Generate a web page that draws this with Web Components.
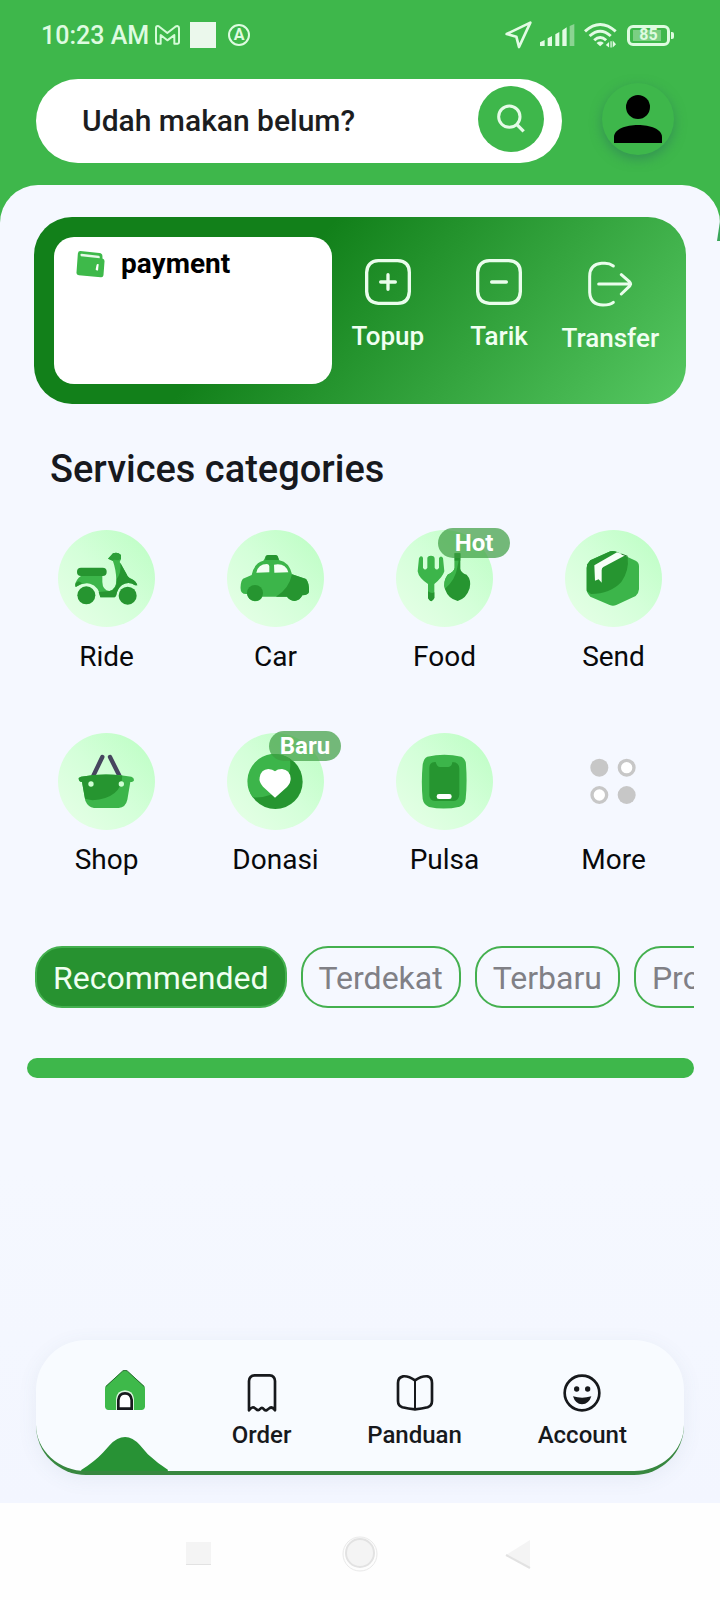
<!DOCTYPE html>
<html lang="id">
<head>
<meta charset="utf-8">
<meta name="viewport" content="width=device-width, initial-scale=1">
<title>Home</title>
<style>
  html { height: 100%; }
  body { margin: 0; min-height: 100%; display: flex; font-family: Roboto, sans-serif; }
</style>
</head>
<body>
<home-screen></home-screen>
<script>
const define = (name, markup, render, observed = []) => {
  const template = document.createElement('template');
  template.innerHTML = markup;
  customElements.define(name, class extends HTMLElement {
    static observedAttributes = observed;
    constructor() {
      super();
      this.attachShadow({ mode: 'open' }).append(template.content.cloneNode(true));
    }
    connectedCallback() { if (render) render(this, this.shadowRoot); }
    attributeChangedCallback() { if (render) render(this, this.shadowRoot); }
  });
};

const icons = {
  mail: ['0 0 75 60', '<path d="M3 9Q3 3 8 3Q11 3 13 5L37 24L61 5Q64 3 67 3Q72 4 72 9V52Q72 56 68 56H58V30L37 46L17 30V56H7Q3 56 3 52Z" fill="none" stroke="#d5fbd8" stroke-width="6" stroke-linejoin="round"/>'],
  locate: ['0 0 81 84', '<path d="M76 5L42 78L34 47L5 39Z" fill="none" stroke="#e2fbe4" stroke-width="8" stroke-linejoin="round"/>'],
  signal: ['0 0 105 66', '<path d="M0 66V55L14 48V66ZM23 66V43L36 36V66ZM46 66V31L58 24V66ZM67 66V19L80 10V66Z" fill="#e2fbe4"/><path d="M89 66V6L103 0V66Z" fill="#8bd492"/>'],
  wifi: ['0 0 100 78', '<g fill="none" stroke="#e2fbe4" stroke-width="9"><path d="M3 28Q49 -14 96 28"/><path d="M17 42Q49 13 81 42"/><path d="M31 55Q49 38 67 55"/></g><path d="M38 63Q49 55 60 63L49 73Z" fill="#e2fbe4"/><path d="M66 69L76 60V77ZM80 58H84V77H80ZM87 77V56L97 67Z" fill="#e2fbe4"/>'],
  search: ['0 0 90 90', '<circle cx="40" cy="38" r="32" fill="none" stroke="#e5fbe7" stroke-width="9"/><path d="M62 61L83 82" stroke="#e5fbe7" stroke-width="10"/>'],
  person: ['0 0 144 144', '<circle cx="72" cy="36" r="36"/><path d="M0 144V126C0 102 36 90 72 90S144 102 144 126V144Z"/>'],
  wallet: ['0 0 84 82', '<path d="M12 3L68 9Q77 10 77 18V25Q84 27 83 34L80 74Q79 81 72 80L8 74Q0 73 1 66L5 10Q6 3 12 3Z" fill="#3eb94a"/><path d="M16 11L66 17Q70 18 69 22V24L14 18Q10 12 16 11Z" fill="#e6f9e8"/><path d="M60 43Q62 39 66 42L64 60Q59 61 57 57Z" fill="#fff"/>'],
  plus: ['0 0 138 138', '<g fill="none" stroke="#eafdec" stroke-width="10" stroke-linecap="round"><path d="M40 5H98Q133 7 133 40V98Q131 133 98 133H40Q7 131 5 98V40Q7 7 40 5Z"/><path d="M47 69H91M69 47V91"/></g>'],
  minus: ['0 0 138 138', '<g fill="none" stroke="#eafdec" stroke-width="10" stroke-linecap="round"><path d="M40 5H98Q133 7 133 40V98Q131 133 98 133H40Q7 131 5 98V40Q7 7 40 5Z"/><path d="M47 69H91"/></g>'],
  transfer: ['0 0 138 144', '<g fill="none" stroke="#eafdec" stroke-width="9" stroke-linecap="round" stroke-linejoin="round"><path d="M79 21Q68 13 54 13H44Q8 16 8 52V100Q10 137 48 138Q70 138 79 130"/><path d="M35 75H131M103 47L127 68Q134 75 127 82L103 105"/></g>'],
  ride: ['85 60 291 291', '<path d="M235 146L250 130Q263 124 274 135V147L270 156L291 193Q294 203 306 207Q320 214 323 226H316Q297 212 277 225Q263 235 259 258L255 262H212Q208 229 181 221Q160 217 138 231Q133 219 147 203L157 196H218V216Q219 241 239 243Q260 238 260 210Q259 178 249 151Z" fill="#3cb54a"/><path d="M272 158L291 193Q294 203 306 207Q320 214 323 226H316Q297 212 277 225Q263 235 259 258L255 262H212L207 246L240 243Q263 237 261 207Q276 187 272 158ZM138 231Q133 219 147 214L158 220Z" fill="#269530"/><path d="M235 146L250 130Q263 124 274 135V147L265 151Q250 147 249 153Z" fill="#2c9f38"/><rect x="142" y="173" width="89" height="25" rx="12" fill="#269530"/><circle cx="170" cy="256" r="27" fill="#269530"/><circle cx="294" cy="257" r="27" fill="#269530"/>'],
  car: ['593 60 291 291', '<path d="M641 206L667 195Q675 158 702 152L711 137Q727 133 744 137L750 151Q779 156 788 193L830 207Q840 219 839 245Q837 255 819 256Q812 271 796 273Q779 270 773 260H699Q695 272 676 274Q657 270 653 252Q631 254 634 228Q635 212 641 206Z" fill="#3cb54a"/><path d="M788 193L830 207Q840 219 839 245Q837 255 819 256Q812 271 796 273Q779 270 773 260H740Q779 237 788 193Z" fill="#269530"/><path d="M708 150V143Q708 135 716 135H740Q747 136 748 150Z" fill="#269530"/><circle cx="677" cy="249" r="24" fill="#269530"/><path d="M681 188Q686 162 713 162Q720 163 720 169V187ZM734 164Q769 158 777 187L735 188Z" fill="#f2fff3"/>'],
  food: ['79 60 291 291', '<path d="M153 139Q159 138 160 144V173Q166 184 173 173V145Q173 137 184 137Q195 137 195 146V173Q201 184 208 173V144Q214 135 220 144L224 184Q219 202 194 222V264Q184 283 175 264V222Q147 204 144 184L148 144Z" fill="#3cb54a"/><path d="M175 244Q186 252 194 247V264Q184 283 175 264Z" fill="#269530"/><path d="M255 130H272V176Q274 188 291 194Q306 210 300 235Q290 266 264 273Q236 267 226 238Q219 216 234 194Q252 186 255 174Z" fill="#269530"/><path d="M255 130H266Q270 145 263 172Q257 211 226 236Q219 213 234 194Q252 186 255 174Z" fill="#3cb54a"/><path d="M255 130H272V152H255Z" fill="#269530"/>'],
  send: ['587 60 291 291', '<path d="M654 163L663 151L723 124Q732 121 741 125L799 152Q809 157 809 169V238Q808 251 799 258L741 285Q731 290 721 285L663 260Q652 250 652 238V174Z" fill="#3cb54a"/><path d="M654 163L663 151L723 124Q732 121 741 125L775 141Q780 182 756 216Q722 252 665 252L652 243V174Z" fill="#269530"/><path d="M675 166L743 127L768 136L702 171Q697 174 697 181V218L688 208L677 212Z" fill="#f7fff7"/><path d="M756 132L775 139" stroke="#267b2e" stroke-width="3"/>'],
  shop: ['85 69 291 291', '<path d="M218 141L190 199M241 141L270 199" stroke="#46455e" stroke-width="13" stroke-linecap="round"/><path d="M147 204L154 200Q232 187 305 200Q313 202 313 210Q312 216 302 216L293 269Q288 292 267 294H193Q175 291 167 272L157 216Q147 216 147 204Z" fill="#3cb54a"/><path d="M147 204L154 200Q220 189 278 197Q276 264 188 271L166 266L157 216Q147 216 147 204Z" fill="#269530"/><circle cx="184" cy="222" r="8" fill="#d0ffd4"/><circle cx="275" cy="222" r="8" fill="#d0ffd4"/>'],
  donate: ['592 69 291 291', '<circle cx="737" cy="215" r="82" fill="#269530"/><path d="M669 262A82 82 0 0 1 780 145Q789 194 757 229Q725 266 669 262Z" fill="#3cb54a"/><path d="M736 263L700 230Q687 216 690 202Q694 178 716 177Q729 178 736 184Q743 177 757 177Q781 180 783 205Q784 218 772 231Z" fill="#fff"/>'],
  phone: ['79 69 291 291', '<path d="M173 140Q224 128 275 140Q289 147 289 165Q293 217 288 267Q285 285 270 290Q224 301 178 291Q162 284 159 267Q154 216 159 164Q162 145 173 140Z" fill="#3cb54a"/><path d="M179 174Q179 155 198 156Q202 171 211 171H236Q247 169 248 156Q268 156 269 176V253Q268 272 252 273H196Q178 271 179 253Z" fill="#269530"/><rect x="201" y="252" width="45" height="15" rx="7" fill="#fff"/>'],
  more: ['587 69 291 291', '<g fill="#c7c7c7"><circle cx="690" cy="173" r="27"/><circle cx="772" cy="255" r="27"/></g><g fill="#fff" stroke="#c7c7c7" stroke-width="10"><circle cx="772" cy="173" r="22"/><circle cx="690" cy="255" r="22"/></g>'],
  home: ['0 0 120 120', '<path d="M53 3Q60 -2 67 3L117 48Q120 52 120 56V110Q119 119 110 120H10Q1 119 0 110V56Q0 52 3 48Z" fill="#3eb94a"/><path d="M2 50L53 3Q60 -2 67 3L118 50" fill="none" stroke="#256b2d" stroke-width="3"/><path d="M33 120V86Q36 62 60 61Q84 62 87 86V120Z" fill="#d9f7dc"/><path d="M40 116V90Q42 70 60 70Q78 70 80 90V116Z" fill="#fff" stroke="#17191c" stroke-width="8"/>'],
  receipt: ['0 0 120 120', '<path d="M21 112V24Q22 8 38 7H83Q98 8 99 24V112Q91 100 83 105L75 111Q69 114 65 108Q60 101 54 108Q49 115 42 108Q31 97 21 112Z" fill="none" stroke="#17191c" stroke-width="8" stroke-linejoin="round"/>'],
  book: ['0 0 120 120', '<path d="M60 22Q40 8 24 10Q9 13 9 30V84Q9 98 22 103Q40 108 60 109Q80 108 98 103Q111 98 111 84V30Q111 13 98 10Q80 8 60 22Z" fill="none" stroke="#17191c" stroke-width="8" stroke-linejoin="round"/><path d="M60 22V109" stroke="#17191c" stroke-width="6"/>'],
  smile: ['0 0 120 120', '<circle cx="60" cy="60" r="52" fill="none" stroke="#17191c" stroke-width="8"/><circle cx="44" cy="48" r="8" fill="#17191c"/><circle cx="77" cy="48" r="8" fill="#17191c"/><path d="M33 70Q60 78 88 70Q81 93 60 94Q40 93 33 70Z" fill="#17191c"/>'],
  bump: ['0 0 260 102', '<path d="M0 102V99Q42 72 65 47L86 24Q108 0 132 0Q154 0 176 24L200 52Q230 80 260 98V102Z" fill="#289235"/>'],
  recents: ['0 0 36 36', '<rect x="6" y="8" width="25" height="21" fill="#e2e2e2"/><rect x="6" y="6" width="25" height="22" fill="#f4f4f4"/>'],
  circle: ['0 0 36 36', '<circle cx="18" cy="18" r="17" fill="#fdfdfd" stroke="#e9e9e9" stroke-width="1"/><circle cx="18" cy="17" r="14" fill="#f4f4f4" stroke="#e2e2e2" stroke-width="2"/>'],
  back: ['0 0 36 36', '<path d="M26 4V32L2 19Z" fill="#f4f4f4"/><path d="M2 19L26 32" stroke="#e2e2e2" stroke-width="2"/>'],
};

define('ui-icon', `<style>:host{display:block;flex:none}svg{display:block;width:100%;height:100%}</style><svg aria-hidden="true"></svg>`,
  (el, root) => {
    const icon = icons[el.getAttribute('name')];
    if (!icon) return;
    const svg = root.querySelector('svg');
    svg.setAttribute('viewBox', icon[0]);
    svg.innerHTML = icon[1];
  }, ['name']);

define('status-bar', `
<style>
  :host { display: flex; align-items: center; justify-content: space-between; height: 70px; padding: 0 46px 0 41px; color: #defbe0; font-weight: 500; font-size: 25px; }
  div { display: flex; align-items: center; }
  .mail { width: 25px; height: 20px; margin: 0 10px 0 6px; }
  .app { width: 26px; height: 26px; margin-right: 12px; background: #ebf8ec; }
  .ring { box-sizing: border-box; width: 22px; height: 22px; border: 2px solid; border-radius: 50%; justify-content: center; font-size: 16px; line-height: 18px; font-weight: 700; }
  .locate { width: 27px; height: 28px; margin-right: 8px; }
  .signal { width: 35px; height: 22px; margin-right: 9px; }
  .wifi { width: 33px; height: 26px; margin-right: 10px; }
  .cell { box-sizing: border-box; width: 43px; height: 21px; border: 3px solid; border-radius: 6px; justify-content: center; font-size: 16px; line-height: 16px; font-weight: 700; background: linear-gradient(#7bcf83, #7bcf83) 3px 2px / 28px 11px no-repeat; }
  .tip { width: 3px; height: 7px; margin-left: 1px; background: currentColor; border-radius: 0 2px 2px 0; }
</style>
<div><span>10:23 AM</span><ui-icon class="mail" name="mail"></ui-icon><span class="app"></span><div class="ring">A</div></div>
<div><ui-icon class="locate" name="locate"></ui-icon><ui-icon class="signal" name="signal"></ui-icon><ui-icon class="wifi" name="wifi"></ui-icon><div class="cell">85</div><span class="tip"></span></div>`);

define('search-bar', `
<style>
  :host { display: flex; align-items: flex-start; padding: 9px 46px 22px 36px; gap: 40px; }
  form { flex: 1; display: flex; box-sizing: border-box; height: 84px; margin: 0; padding: 7px 18px 7px 46px; background: #fff; border-radius: 42px; }
  input { flex: 1; min-width: 0; border: 0; padding: 0; outline: 0; background: none; font: 500 30px/34px Roboto, sans-serif; color: #1c1d20; }
  input::placeholder { color: #1c1d20; opacity: 1; }
  button { display: grid; place-items: center; flex: none; border: 0; padding: 0; border-radius: 50%; background: #3eb74b; }
  .go { width: 66px; height: 66px; }
  .go ui-icon { width: 30px; height: 30px; }
  .me { width: 72px; height: 72px; margin-top: 4px; box-shadow: 0 4px 12px #2d7a5a99; }
  .me ui-icon { width: 48px; height: 48px; }
</style>
<form role="search"><input type="text" aria-label="Search" placeholder="Udah makan belum?"><button class="go" type="button" aria-label="Search"><ui-icon name="search"></ui-icon></button></form>
<button class="me" type="button" aria-label="Profile"><ui-icon name="person"></ui-icon></button>`);

define('wallet-action', `
<style>
  :host { display: block; }
  button { display: flex; flex-direction: column; align-items: center; gap: 17px; width: 100%; border: 0; padding: 22px 0 0; background: none; color: #f0fff1; font: 500 26px/28px Roboto, sans-serif; }
  ui-icon { width: 46px; height: 46px; }
  :host([tall]) ui-icon { height: 48px; }
</style>
<button type="button"><ui-icon></ui-icon><slot></slot></button>`,
  (el, root) => root.querySelector('ui-icon').setAttribute('name', el.getAttribute('icon')));

define('wallet-card', `
<style>
  :host { display: grid; grid-template-columns: 5fr 6fr; box-sizing: border-box; min-height: 187px; margin: 0 34px; padding: 20px; border-radius: 38px; background: linear-gradient(132deg, #12801a 37%, #56c862 100%); }
  .panel { display: flex; align-items: flex-start; gap: 16px; padding: 13px 22px; background: #fff; border-radius: 20px; color: #000; font-weight: 700; font-size: 28px; line-height: 28px; }
  .panel ui-icon { width: 29px; height: 28px; }
  .actions { display: grid; grid-template-columns: repeat(3, 1fr); }
</style>
<div class="panel"><ui-icon name="wallet"></ui-icon><span>payment</span></div>
<div class="actions">
  <wallet-action icon="plus">Topup</wallet-action>
  <wallet-action icon="minus">Tarik</wallet-action>
  <wallet-action icon="transfer" tall>Transfer</wallet-action>
</div>`);

define('service-item', `
<style>
  :host { display: block; }
  a { display: flex; flex-direction: column; align-items: center; gap: 13px; color: #08090b; text-decoration: none; font-size: 28px; line-height: 34px; }
  .disc { position: relative; width: 97px; height: 97px; border-radius: 50%; background: linear-gradient(225deg, #c0fec7 10%, #d4ffd9 50%, #e4ffe5 90%); }
  :host([plain]) .disc { background: none; }
  .tag { position: absolute; left: 42px; top: -2px; box-sizing: border-box; width: 72px; height: 30px; border-radius: 15px; background: #3c9c40b3; color: #fff; text-align: center; font-weight: 700; font-size: 24px; line-height: 30px; }
  .tag[hidden] { display: none; }
</style>
<a href="#"><div class="disc"><ui-icon></ui-icon><span class="tag" hidden></span></div><slot></slot></a>`,
  (el, root) => {
    root.querySelector('ui-icon').setAttribute('name', el.getAttribute('icon'));
    const tag = root.querySelector('.tag');
    tag.textContent = el.getAttribute('tag') || '';
    tag.hidden = !tag.textContent;
  });

define('service-grid', `
<style>
  :host { display: block; }
  h2 { margin: 43px 50px 39px; color: #17191e; font-weight: 500; font-size: 38px; line-height: 44px; }
  .grid { display: grid; grid-template-columns: repeat(4, 1fr); row-gap: 59px; margin: 0 22px; }
</style>
<h2>Services categories</h2>
<div class="grid">
  <service-item icon="ride">Ride</service-item>
  <service-item icon="car">Car</service-item>
  <service-item icon="food" tag="Hot">Food</service-item>
  <service-item icon="send">Send</service-item>
  <service-item icon="shop">Shop</service-item>
  <service-item icon="donate" tag="Baru">Donasi</service-item>
  <service-item icon="phone">Pulsa</service-item>
  <service-item icon="more" plain>More</service-item>
</div>`);

define('filter-chip', `
<style>
  :host { display: block; flex: none; }
  button { display: block; height: 62px; padding: 2px 16px 0; border: 2px solid #44b04f; border-radius: 27px; background: none; color: #808086; font: 400 32px/56px Roboto, sans-serif; white-space: nowrap; }
  :host([selected]) button { background: #279230; color: #f0fff1; }
</style>
<button type="button"><slot></slot></button>`);

define('filter-row', `
<style>
  :host { display: flex; gap: 14px; margin: 69px 26px 50px 27px; padding-left: 8px; overflow: hidden; }
</style>
<filter-chip selected>Recommended</filter-chip>
<filter-chip>Terdekat</filter-chip>
<filter-chip>Terbaru</filter-chip>
<filter-chip>Promo</filter-chip>`);

define('nav-item', `
<style>
  :host { display: block; }
  a { display: flex; flex-direction: column; align-items: center; gap: 8px; color: #17191c; text-decoration: none; font-weight: 500; font-size: 24px; line-height: 28px; }
  ui-icon { width: 40px; height: 40px; }
  .bump { display: none; }
  :host([current]) { position: relative; width: 62px; margin-top: -3px; align-self: stretch; }
  :host([current]) .bump { display: block; position: absolute; left: -13px; bottom: 0; width: 87px; height: 34px; }
</style>
<a href="#"><ui-icon class="glyph"></ui-icon><slot></slot></a><ui-icon class="bump" name="bump"></ui-icon>`,
  (el, root) => {
    root.querySelector('.glyph').setAttribute('name', el.getAttribute('icon'));
    const label = el.getAttribute('label');
    if (label) root.querySelector('a').setAttribute('aria-label', label);
  });

define('nav-dock', `
<style>
  :host { display: flex; align-items: flex-start; justify-content: space-between; box-sizing: border-box; height: 135px; margin: auto 36px 28px; padding: 33px 57px 0 58px; border-bottom: 4px solid #37873f; border-radius: 50px; background: #f8fbff; box-shadow: 0 4px 20px #50608014; }
</style>
<nav-item icon="home" label="Home" current></nav-item>
<nav-item icon="receipt">Order</nav-item>
<nav-item icon="book">Panduan</nav-item>
<nav-item icon="smile">Account</nav-item>`);

define('system-nav', `
<style>
  :host { display: grid; grid-template-columns: 1fr auto 1fr; align-items: center; column-gap: 126px; height: 97px; padding-top: 4px; box-sizing: border-box; background: #fefefe; }
  button { width: 36px; height: 36px; border: 0; padding: 0; background: none; }
  .first { justify-self: end; }
</style>
<button class="first" type="button" aria-label="Recents"><ui-icon name="recents"></ui-icon></button>
<button type="button" aria-label="Home"><ui-icon name="circle"></ui-icon></button>
<button type="button" aria-label="Back"><ui-icon name="back"></ui-icon></button>`);

define('home-screen', `
<style>
  :host { flex: 1; min-width: 0; display: flex; flex-direction: column; background: #3eb74b; }
  main { position: relative; flex: 1; display: flex; flex-direction: column; padding-top: 32px; border-radius: 38px 38px 0 0; background: linear-gradient(#f5f8ff, #f5f8ff 75%, #f3f6ff); }
  .edge { position: absolute; right: 0; top: 36px; width: 3px; height: 20px; background: #3aa65a; clip-path: polygon(100% 0, 100% 100%, 0 100%); }
  .bar { height: 20px; margin: 0 26px 40px 27px; border-radius: 10px; background: #3eb74b; }
</style>
<status-bar></status-bar>
<search-bar></search-bar>
<main>
  <span class="edge"></span>
  <wallet-card></wallet-card>
  <service-grid></service-grid>
  <filter-row></filter-row>
  <div class="bar"></div>
  <nav-dock></nav-dock>
</main>
<system-nav></system-nav>`);
</script>
</body>
</html>
